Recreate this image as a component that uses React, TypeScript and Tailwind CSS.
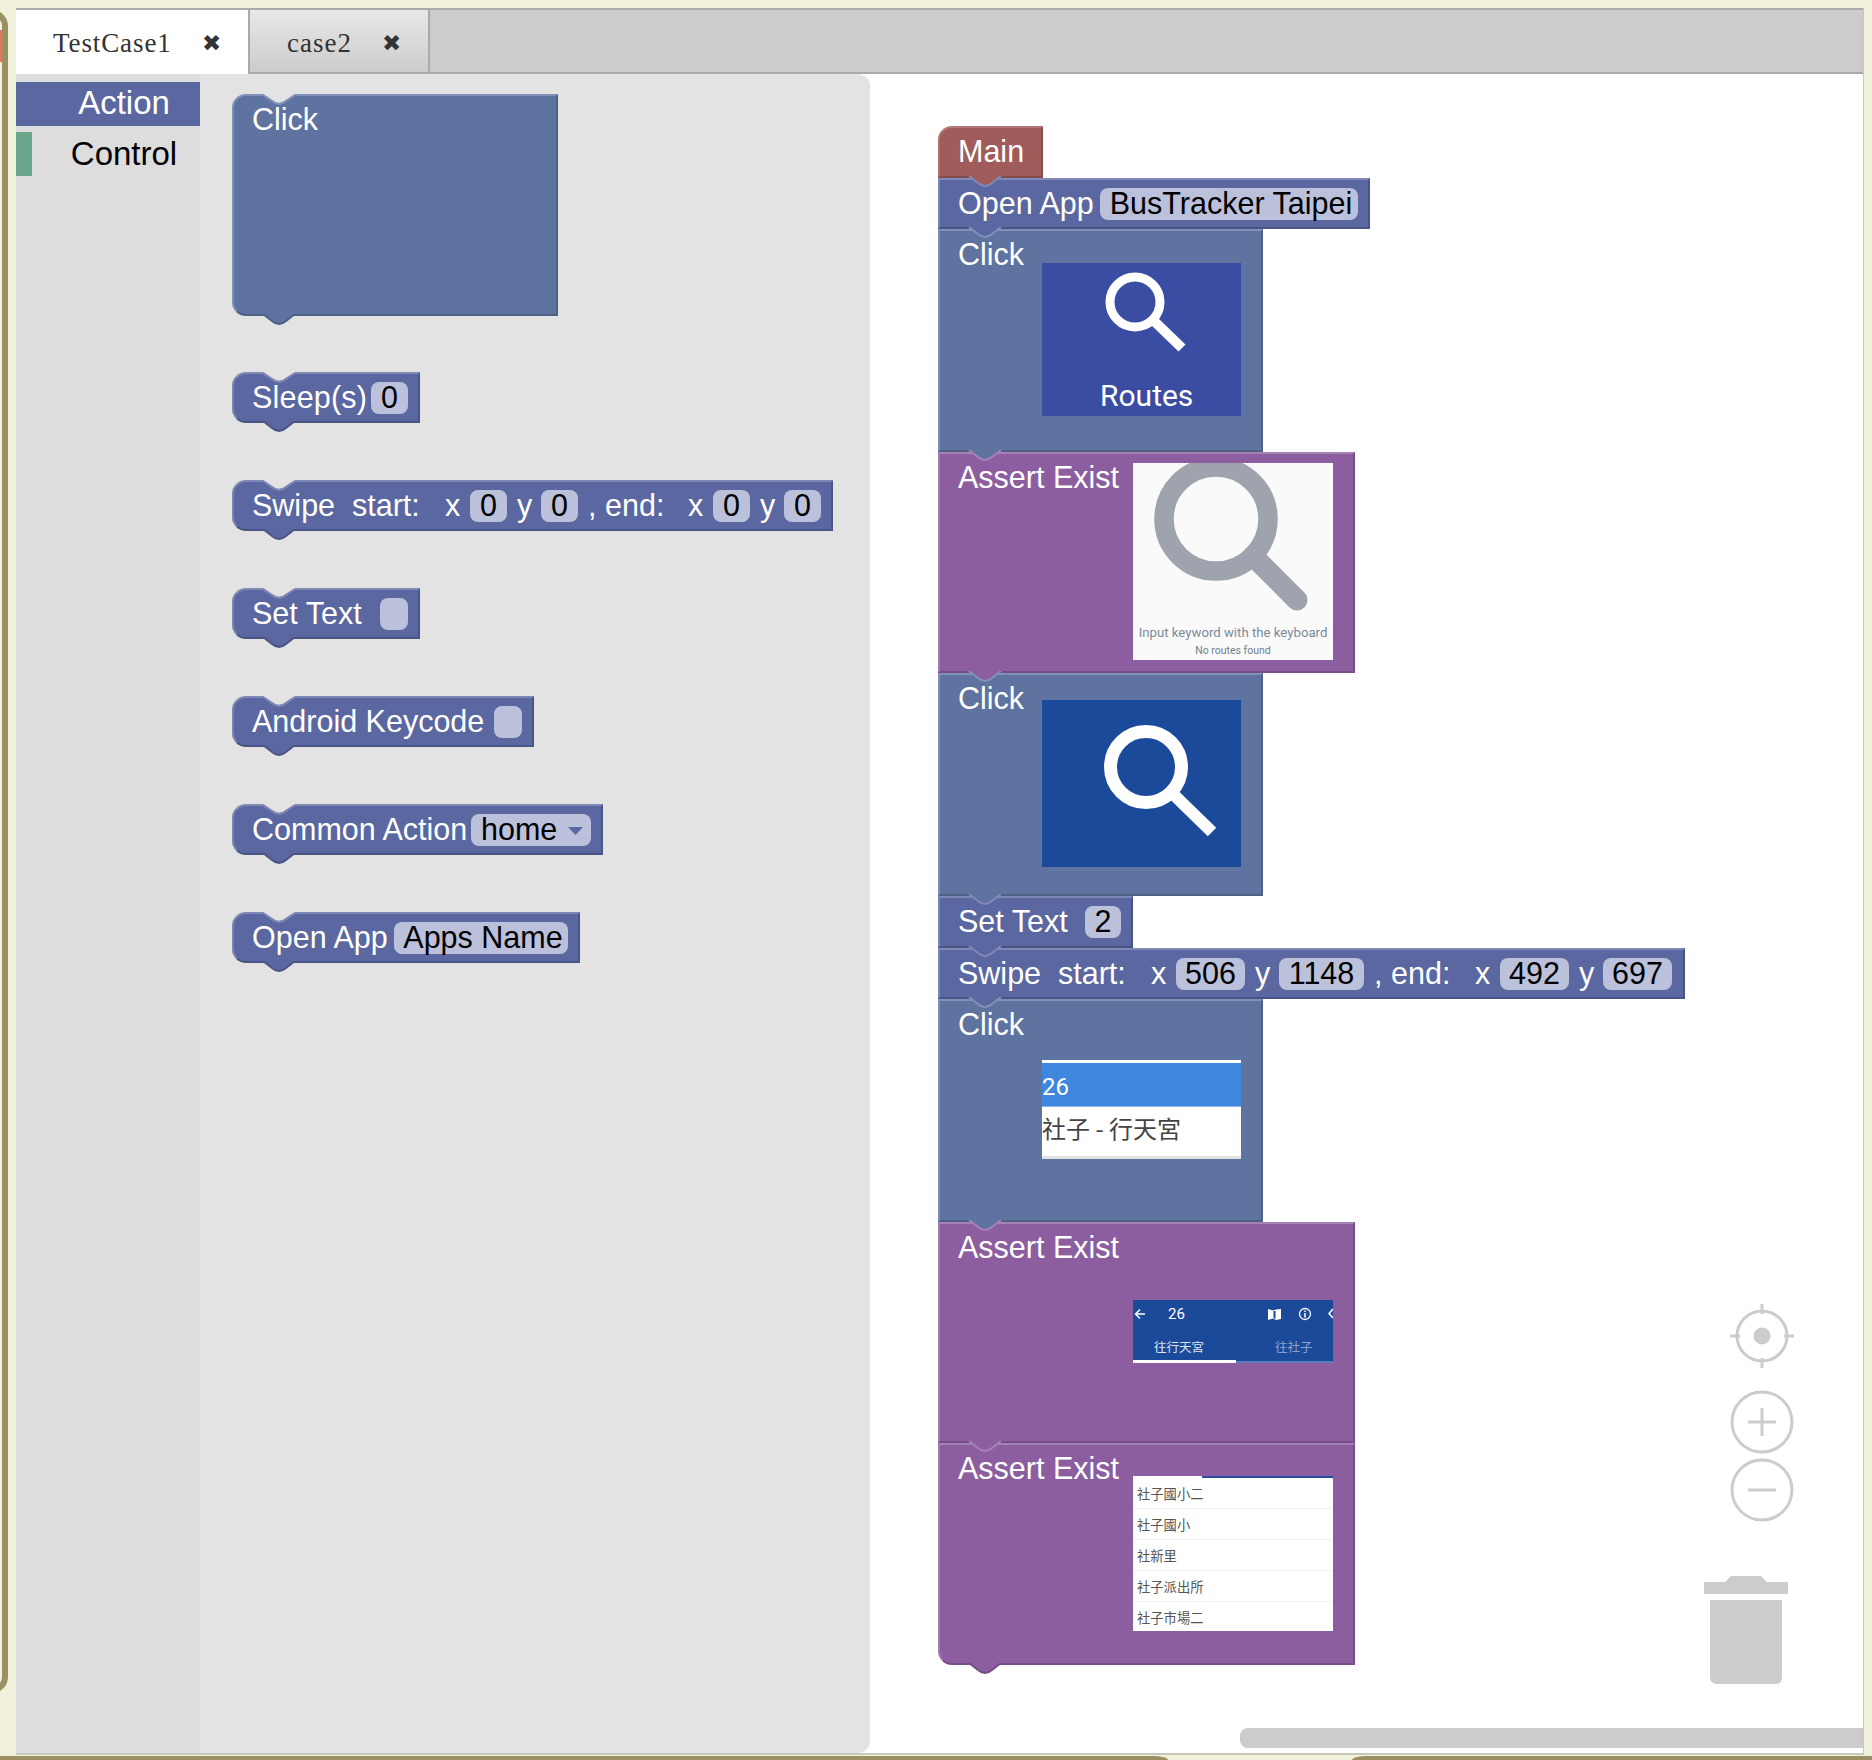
import type { ReactNode } from "react";

type Tone = "main" | "action" | "click" | "assert";

const tones: Record<Tone, { box: string; fill: string; edge: string; hi: string }> = {
  main: {
    box: "bg-[#a05b5b] border-t-[#b17878] border-l-[#ad7070] border-r-[#854c4c] border-b-[#854c4c]",
    fill: "fill-[#a05b5b]",
    edge: "stroke-[#854c4c]",
    hi: "stroke-[#b17878]",
  },
  action: {
    box: "bg-[#5b67a0] border-t-[#8088b8] border-l-[#7a84b3] border-r-[#4b5585] border-b-[#4b5585]",
    fill: "fill-[#5b67a0]",
    edge: "stroke-[#4b5585]",
    hi: "stroke-[#8088b8]",
  },
  click: {
    box: "bg-[#5f73a0] border-t-[#8090b8] border-l-[#7d8fb5] border-r-[#4f6085] border-b-[#4f6085]",
    fill: "fill-[#5f73a0]",
    edge: "stroke-[#4f6085]",
    hi: "stroke-[#8090b8]",
  },
  assert: {
    box: "bg-[#8c5ea0] border-t-[#a581b5] border-l-[#a07ab2] border-r-[#744e85] border-b-[#744e85]",
    fill: "fill-[#8c5ea0]",
    edge: "stroke-[#744e85]",
    hi: "stroke-[#a581b5]",
  },
};

function Block({
  tone,
  next,
  loose,
  roundTop,
  roundBottom,
  className,
  children,
}: {
  tone: Tone;
  next?: Tone;
  loose?: boolean;
  roundTop?: boolean;
  roundBottom?: boolean;
  className: string;
  children: ReactNode;
}) {
  const t = tones[tone];
  return (
    <div
      className={`relative shrink-0 flex items-start border-2 pl-[18px] text-white text-[30.5px] ${t.box} ${
        roundTop ? "rounded-tl-[14px]" : ""
      } ${roundBottom ? "rounded-bl-[14px]" : ""} ${className}`}
    >
      {children}
      {loose && (
        <svg width="34" height="14" className="absolute left-[28px] top-[-2px]">
          <path d="M1 0 L10 6 Q17 12 24 6 L33 0 Z" className="fill-[#e3e3e3]" />
          <path d="M1 1 L10 7 Q17 13 24 7 L33 1" fill="none" strokeWidth="2" className={t.hi} />
        </svg>
      )}
      <svg width="34" height="14" className="absolute left-[28px] top-full z-10">
        <path d="M1 0 L10 7 Q17 13 24 7 L33 0 Z" className={t.fill} />
        <path
          d="M1 0 L10 7 Q17 13 24 7 L33 0"
          fill="none"
          strokeWidth="2"
          className={next ? tones[next].hi : t.edge}
        />
      </svg>
    </div>
  );
}

function Field({ className, children }: { className: string; children?: ReactNode }) {
  return (
    <span
      className={`shrink-0 h-[32px] mt-[8px] pb-[2px] rounded-[8px] bg-[#bcc1db] text-black flex items-center justify-center leading-none ${className}`}
    >
      {children}
    </span>
  );
}

function Label({ className, children }: { className: string; children: ReactNode }) {
  return <span className={`shrink-0 h-[47px] leading-[47px] whitespace-pre ${className}`}>{children}</span>;
}

function SwipeRow({ values, endWidth }: { values: { v: string; w: string }[]; endWidth: string }) {
  return (
    <>
      <Label className="w-[100px]">Swipe</Label>
      <Label className="w-[93px]">start:</Label>
      <Label className="w-[25px]">x</Label>
      <Field className={values[0].w}>{values[0].v}</Field>
      <Label className="ml-[10px] w-[24px]">y</Label>
      <Field className={values[1].w}>{values[1].v}</Field>
      <Label className="ml-[10px] w-[17px]">,</Label>
      <Label className={endWidth}>end:</Label>
      <Label className="w-[25px]">x</Label>
      <Field className={values[2].w}>{values[2].v}</Field>
      <Label className="ml-[10px] w-[24px]">y</Label>
      <Field className={values[3].w}>{values[3].v}</Field>
    </>
  );
}

function Flyout() {
  const zero = { v: "0", w: "w-[37px]" };
  return (
    <div className="w-[670px] shrink-0 bg-[#e3e3e3] rounded-r-[12px] pl-[32px] pt-[20px] flex flex-col items-start gap-[57px]">
      <Block tone="click" loose roundTop roundBottom className="w-[326px] h-[222px] -mb-[1px]">
        <Label className="">Click</Label>
      </Block>
      <Block tone="action" loose roundTop roundBottom className="w-[188px] h-[51px]">
        <Label className="w-[119px] tracking-[0.2px]">Sleep(s)</Label>
        <Field className="w-[37px]">0</Field>
      </Block>
      <Block tone="action" loose roundTop roundBottom className="w-[601px] h-[51px]">
        <SwipeRow values={[zero, zero, zero, zero]} endWidth="w-[83px]" />
      </Block>
      <Block tone="action" loose roundTop roundBottom className="w-[188px] h-[51px]">
        <Label className="w-[128px]">Set Text</Label>
        <Field className="w-[28px]" />
      </Block>
      <Block tone="action" loose roundTop roundBottom className="w-[302px] h-[51px]">
        <Label className="w-[242px]">Android Keycode</Label>
        <Field className="w-[28px]" />
      </Block>
      <Block tone="action" loose roundTop roundBottom className="w-[371px] h-[51px]">
        <Label className="w-[219px]">Common Action</Label>
        <Field className="w-[120px] !justify-start pl-[10px]">
          home
          <svg width="15" height="8" className="ml-[11px] mt-[3px]">
            <path d="M0 0 H15 L7.5 8 Z" className="fill-[#5b67a0]" />
          </svg>
        </Field>
      </Block>
      <Block tone="action" loose roundTop roundBottom className="w-[348px] h-[51px]">
        <Label className="w-[142px]">Open App</Label>
        <Field className="w-[174px] pl-[4px]">Apps Name</Field>
      </Block>
    </div>
  );
}

function RoutesShot() {
  return (
    <div className="relative shrink-0 w-[199px] h-[153px] mt-[32px] bg-[#3a4da3]">
      <svg width="199" height="153" className="absolute inset-0">
        <circle cx="93" cy="39" r="25" fill="none" stroke="#fff" strokeWidth="9" />
        <path d="M112 58 L140 85" stroke="#fff" strokeWidth="10" />
      </svg>
      <span className="absolute left-[58px] top-[116px] font-['Roboto',sans-serif] text-[30px] leading-[34px]">Routes</span>
    </div>
  );
}

function EmptyShot() {
  return (
    <div className="relative shrink-0 w-[200px] h-[197px] mt-[9px] bg-[#fafafa] font-['Roboto',sans-serif] text-center whitespace-nowrap">
      <svg width="200" height="197" className="absolute inset-0">
        <circle cx="83" cy="56" r="52" fill="none" stroke="#9ea3ad" strokeWidth="19.5" />
        <path d="M120 93 L164 137" stroke="#9ea3ad" strokeWidth="21" strokeLinecap="round" />
      </svg>
      <p className="absolute left-0 right-0 top-[161px] text-[13.2px] leading-[18px] text-[#7b8a97]">Input keyword with the keyboard</p>
      <p className="absolute left-0 right-0 top-[181px] text-[10.5px] leading-[14px] text-[#6f7f8a]">No routes found</p>
    </div>
  );
}

function SearchShot() {
  return (
    <div className="shrink-0 w-[199px] h-[167px] mt-[25px] bg-[#1c4a9a]">
      <svg width="199" height="167">
        <circle cx="104" cy="67" r="35.5" fill="none" stroke="#fff" strokeWidth="13" />
        <path d="M130 93 L170 132" stroke="#fff" strokeWidth="12" />
      </svg>
    </div>
  );
}

function RouteShot() {
  return (
    <div className="shrink-0 w-[199px] h-[99px] mt-[59px] bg-white flex flex-col">
      <div className="mt-[3px] h-[44px] bg-[#3f87de] border-b border-[#8ab6ea] text-white font-['Roboto',sans-serif] text-[24px] leading-[48px]">26</div>
      <div className="flex-1 border-b-[3px] border-[#e2e2e2] text-[#444] font-['Noto_Sans_CJK_TC',sans-serif] text-[24px] leading-[42px] whitespace-pre">
        社子 - 行天宮
      </div>
    </div>
  );
}

function HeaderShot() {
  return (
    <div className="relative shrink-0 w-[200px] h-[63px] mt-[76px] bg-[#1c4a9a] overflow-hidden text-white">
      <svg width="200" height="28" className="absolute left-0 top-0">
        <path d="M12 14 H3 M7 9.5 L2.5 14 L7 18.5" fill="none" stroke="#fff" strokeWidth="1.5" />
        <path d="M135 9 L140 10.5 L143 9.5 L148 9 V19 L143 20 L140 18.5 L135 20 Z" fill="#fff" />
        <path d="M140.5 11 V18 L142.5 19 V11 Z" fill="#1c4a9a" />
        <circle cx="172" cy="14" r="5.5" fill="none" stroke="#fff" strokeWidth="1.3" />
        <path d="M172 13 V17.5 M172 10.5 V12" stroke="#fff" strokeWidth="1.5" />
        <path d="M200 9 L196 13.5 L200 18" fill="none" stroke="#fff" strokeWidth="1.5" />
      </svg>
      <span className="absolute left-[35px] top-[5px] font-['Roboto',sans-serif] text-[15px] leading-[18px]">26</span>
      <span className="absolute left-[21px] top-[38px] font-['Noto_Sans_CJK_TC',sans-serif] text-[12.5px] leading-[18px] text-[#dfe5f0]">往行天宮</span>
      <span className="absolute left-[142px] top-[38px] font-['Noto_Sans_CJK_TC',sans-serif] text-[12.5px] leading-[18px] text-[#8ea3cc]">往社子</span>
      <div className="absolute left-0 right-0 bottom-0 h-[2px] bg-[#5a7bb5]" />
      <div className="absolute left-0 bottom-0 w-[103px] h-[3px] bg-white" />
    </div>
  );
}

function SearchListShot() {
  const rows = ["社子國小二", "社子國小", "社新里", "社子派出所", "社子市場二"];
  return (
    <div className="shrink-0 w-[200px] h-[155px] mt-[31px] bg-white overflow-hidden font-['Noto_Sans_CJK_TC',sans-serif] text-[13.3px] text-[#555]">
      <div className="h-[2px] bg-[#2a4da0]">
        <div className="h-full w-[69px] bg-white" />
      </div>
      {rows.map((r) => (
        <div key={r} className="h-[31px] leading-[31px] pl-[4px] border-b border-[#f2f2f2] last:border-b-0">
          {r}
        </div>
      ))}
    </div>
  );
}

function Workspace() {
  return (
    <div className="relative flex-1 bg-white pl-[68px] pt-[52px] flex flex-col items-start">
      <Block tone="main" next="action" roundTop className="w-[105px] h-[52px]">
        <Label className="">Main</Label>
      </Block>
      <Block tone="action" next="click" className="w-[432px] h-[51px]">
        <Label className="w-[142px]">Open App</Label>
        <Field className="w-[258px] pl-[4px]">BusTracker Taipei</Field>
      </Block>
      <Block tone="click" next="assert" className="w-[325px] h-[223px]">
        <Label className="w-[84px]">Click</Label>
        <RoutesShot />
      </Block>
      <Block tone="assert" next="click" className="w-[417px] h-[221px]">
        <Label className="w-[175px]">Assert Exist</Label>
        <EmptyShot />
      </Block>
      <Block tone="click" next="action" className="w-[325px] h-[223px]">
        <Label className="w-[84px]">Click</Label>
        <SearchShot />
      </Block>
      <Block tone="action" next="action" className="w-[195px] h-[52px]">
        <Label className="w-[127px]">Set Text</Label>
        <Field className="w-[36px]">2</Field>
      </Block>
      <Block tone="action" next="click" className="w-[747px] h-[51px]">
        <SwipeRow
          endWidth="w-[84px]"
          values={[
            { v: "506", w: "w-[69px]" },
            { v: "1148", w: "w-[85px]" },
            { v: "492", w: "w-[69px]" },
            { v: "697", w: "w-[69px]" },
          ]}
        />
      </Block>
      <Block tone="click" next="assert" className="w-[325px] h-[223px]">
        <Label className="w-[84px]">Click</Label>
        <RouteShot />
      </Block>
      <Block tone="assert" next="assert" className="w-[417px] h-[221px]">
        <Label className="w-[175px]">Assert Exist</Label>
        <HeaderShot />
      </Block>
      <Block tone="assert" roundBottom className="w-[417px] h-[222px]">
        <Label className="w-[175px]">Assert Exist</Label>
        <SearchListShot />
      </Block>

      <svg width="90" height="390" className="absolute left-[832px] top-[1226px] overflow-visible">
        <g fill="none" stroke="#ccc">
          <circle cx="60" cy="36" r="25" strokeWidth="3" />
          <path d="M60 4 V14 M60 58 V68 M28 36 H38 M82 36 H92" strokeWidth="3" />
          <circle cx="60" cy="122" r="30" strokeWidth="3" />
          <path d="M46 122 H74 M60 108 V136" strokeWidth="3" />
          <circle cx="60" cy="190" r="30" strokeWidth="3" />
          <path d="M46 190 H74" strokeWidth="3" />
        </g>
        <circle cx="60" cy="36" r="8.5" fill="#ccc" />
        <path d="M2 282 H23 L29 276 H59 L65 282 H86 V294 H2 Z" fill="#ccc" />
        <path d="M8 300 H80 V377 Q80 384 73 384 H15 Q8 384 8 377 Z" fill="#ccc" />
      </svg>

      <div className="absolute left-[370px] right-0 bottom-[5px] h-[20px] rounded-l-[8px] bg-[#ccc]" />
    </div>
  );
}

export default function App() {
  return (
    <div className="relative w-[1872px] h-[1760px] overflow-hidden bg-[#f2f1dc] flex flex-col pt-2 font-['Liberation_Sans',sans-serif]">
      <div className="absolute left-[-24px] top-[10px] w-[32px] h-[1683px] rounded-[20px] border-[6px] border-[#9c8f61]" />
      <div className="absolute left-0 top-[30px] w-[2px] h-[32px] bg-[#e8735f]" />

      <div className="ml-4 mr-2 h-[1747px] flex flex-col border-r border-b-2 border-[#c8c8bc]">
        <div className="h-[66px] shrink-0 flex bg-[#ccc] border-y-2 border-[#aaa] font-['Liberation_Serif',serif] text-[27px]">
          <div className="w-[234px] -mb-[2px] flex items-center bg-white border-r-2 border-[#aaa] pl-[37px] pt-[3px] text-[#333]">
            <span className="w-[149px] tracking-[0.9px]">TestCase1</span>
            <span className="font-['DejaVu_Sans',sans-serif] text-[23px]">✖</span>
          </div>
          <div className="w-[180px] flex items-center bg-linear-to-b from-[#e8e8e8] to-[#ccc] border-r-2 border-[#aaa] pl-[37px] pt-[5px] text-[#333]">
            <span className="w-[95px] tracking-[1px]">case2</span>
            <span className="font-['DejaVu_Sans',sans-serif] text-[23px]">✖</span>
          </div>
        </div>

        <div className="flex-1 flex bg-white">
          <div className="w-[184px] shrink-0 bg-[#ddd] pt-[8px] text-[33px] leading-[42px]">
            <div className="h-[44px] bg-[#5b67a0] pl-[32px] text-center text-white">Action</div>
            <div className="mt-[6px] h-[44px] border-l-[16px] border-[#6aa58c] pl-[16px] text-center leading-[44px] text-black">Control</div>
          </div>
          <Flyout />
          <Workspace />
        </div>
      </div>

      <div className="mt-[1px] h-[4px] flex justify-between">
        <div className="w-[1168px] h-full bg-[#9c8f61] rounded-tr-[15px_4px]" />
        <div className="w-[520px] h-full bg-[#9c8f61] rounded-tl-[15px_4px]" />
      </div>
    </div>
  );
}
